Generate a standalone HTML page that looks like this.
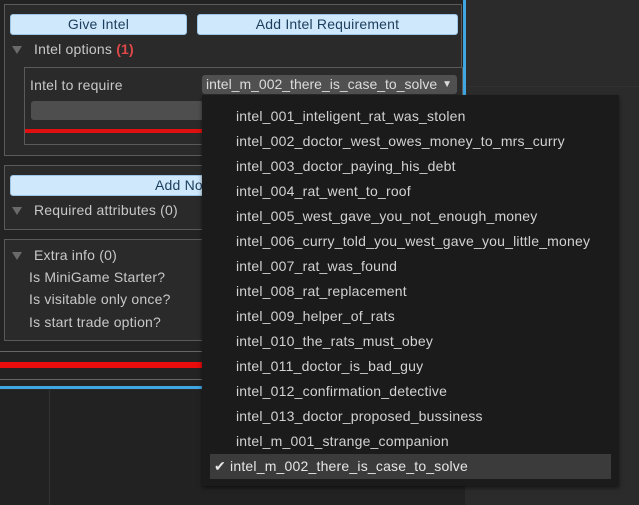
<!DOCTYPE html><html><head><style>
body{margin:0;width:639px;height:505px;overflow:hidden;background:#282828;font-family:"Liberation Sans",sans-serif;font-size:14px;color:#c8c8c8;position:relative;letter-spacing:0.2px}
.a{position:absolute}
.box{position:absolute;border:1px solid #5a5a5a;background:#2a2a2a}
.btn{position:absolute;background:#cfe8fc;border:1px solid #9cc4e6;border-radius:3px;color:#1c3e5c;text-align:center;line-height:19px;font-size:14px}
.tri{position:absolute;width:0;height:0;border-left:5px solid transparent;border-right:5px solid transparent;border-top:8px solid #6a6a6a}
.it{position:absolute;left:236px;color:#d2d2d2;font-size:14px}
</style></head><body>
<div class="a" style="left:0;top:0;width:465px;height:388px;background:#232323"></div>
<div class="a" style="left:0;top:390px;width:465px;height:115px;background:#222"></div>
<div class="a" style="left:49px;top:390px;width:1px;height:115px;background:#333"></div>
<div class="a" style="left:465px;top:0;width:174px;height:505px;background:#2b2b2b"></div>
<div class="a" style="left:467px;top:86px;width:172px;height:1px;background:#323232"></div>
<div class="box" style="left:4px;top:4px;width:456px;height:150px"></div>
<div class="btn" style="left:10px;top:14px;width:175px;height:19px">Give Intel</div>
<div class="btn" style="left:197px;top:14px;width:259px;height:19px">Add Intel Requirement</div>
<div class="tri" style="left:12px;top:46px"></div>
<div class="a" style="left:34px;top:41px">Intel options <b style="color:#e04848">(1)</b></div>
<div class="box" style="left:24px;top:67px;width:437px;height:76px;background:#2a2a2a"></div>
<div class="a" style="left:30px;top:77px">Intel to require</div>
<div class="a" style="left:202px;top:75px;width:255px;height:19px;background:#505050;border-radius:3px;color:#dcdcdc;line-height:19px;text-indent:4px;letter-spacing:0">intel_m_002_there_is_case_to_solve<span style="position:absolute;right:5px;top:0;font-size:10px">▼</span></div>
<div class="a" style="left:31px;top:101px;width:425px;height:19px;background:#4e4e4e;border-radius:3px"></div>
<div class="a" style="left:25px;top:129px;width:436px;height:4px;background:#e01010"></div>
<div class="box" style="left:4px;top:165px;width:456px;height:63px"></div>
<div class="btn" style="left:10px;top:175px;width:446px;height:19px;text-align:left;text-indent:144px">Add Node Attribute</div>
<div class="tri" style="left:12px;top:207px"></div>
<div class="a" style="left:34px;top:202px">Required attributes (0)</div>
<div class="box" style="left:4px;top:239px;width:456px;height:100px"></div>
<div class="tri" style="left:12px;top:252px"></div>
<div class="a" style="left:34px;top:247px">Extra info (0)</div>
<div class="a" style="left:29px;top:269px">Is MiniGame Starter?</div>
<div class="a" style="left:29px;top:291px">Is visitable only once?</div>
<div class="a" style="left:29px;top:314px">Is start trade option?</div>
<div class="a" style="left:0;top:351px;width:465px;height:1px;background:#666"></div>
<div class="a" style="left:0;top:362px;width:465px;height:6px;background:#e80c0c"></div>
<div class="a" style="left:0;top:379px;width:465px;height:1px;background:#666"></div>
<div class="a" style="left:0;top:386px;width:466px;height:3px;background:#3fa6e2"></div>
<div class="a" style="left:463px;top:0;width:3px;height:389px;background:#3fa6e2"></div>
<div class="a" style="left:202px;top:95px;width:417px;height:391px;background:#1b1b1b;box-shadow:0 2px 4px rgba(0,0,0,.5)"></div>
<div class="a" style="left:210px;top:454px;width:401px;height:25px;background:#3b3b3b"></div>
<div class="it" style="top:108px">intel_001_inteligent_rat_was_stolen</div>
<div class="it" style="top:133px">intel_002_doctor_west_owes_money_to_mrs_curry</div>
<div class="it" style="top:158px">intel_003_doctor_paying_his_debt</div>
<div class="it" style="top:183px">intel_004_rat_went_to_roof</div>
<div class="it" style="top:208px">intel_005_west_gave_you_not_enough_money</div>
<div class="it" style="top:233px">intel_006_curry_told_you_west_gave_you_little_money</div>
<div class="it" style="top:258px">intel_007_rat_was_found</div>
<div class="it" style="top:283px">intel_008_rat_replacement</div>
<div class="it" style="top:308px">intel_009_helper_of_rats</div>
<div class="it" style="top:333px">intel_010_the_rats_must_obey</div>
<div class="it" style="top:358px">intel_011_doctor_is_bad_guy</div>
<div class="it" style="top:383px">intel_012_confirmation_detective</div>
<div class="it" style="top:408px">intel_013_doctor_proposed_bussiness</div>
<div class="it" style="top:433px">intel_m_001_strange_companion</div>
<div class="it" style="top:458px;left:214px;color:#e6e6e6">✔ intel_m_002_there_is_case_to_solve</div>
</body></html>
